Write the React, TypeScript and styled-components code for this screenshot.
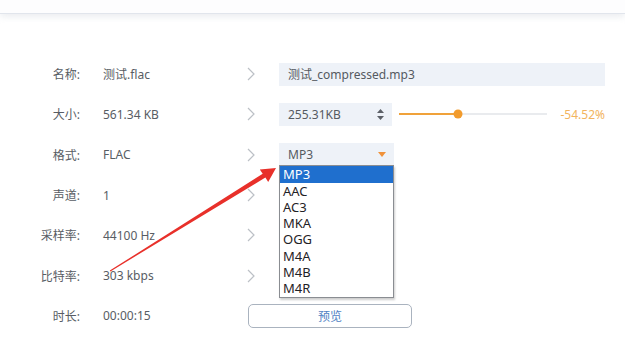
import React from "react";
import styled, { createGlobalStyle } from "styled-components";

const Global = createGlobalStyle`
  html, body { margin: 0; padding: 0; background: #fff; }
  body { font-family: "Noto Sans", "Noto Sans CJK SC", sans-serif; }
`;

const Page = styled.div`
  position: relative;
  width: 625px;
  height: 359px;
  overflow: hidden;
  background: #fff;
`;

const TopBar = styled.div`
  height: 13px;
  background: #fdfdfe;
  border-bottom: 1px solid #e1e5ec;
  box-shadow: 0 3px 6px rgba(200, 206, 216, 0.35);
`;

const Form = styled.div`
  padding: 40px 20px 0 0;
  display: flex;
  flex-direction: column;
`;

const Row = styled.div`
  display: grid;
  grid-template-columns: 80px 167px 31px 1fr;
  align-items: center;
  height: 40.3px;
  font-size: 12px;
  color: #585d64;
`;

const Label = styled.div`
  text-align: right;
  white-space: nowrap;
`;

const Value = styled.div`
  padding-left: 23px;
  white-space: nowrap;
`;

const Chevron = styled.div`
  display: flex;
  align-items: center;
  color: #bcc0c6;
`;

const Control = styled.div`
  display: flex;
  align-items: center;
  gap: 6px;
  position: relative;
  padding-left: 1px;
`;

const TextField = styled.div<{ $w?: number }>`
  box-sizing: border-box;
  height: 23px;
  width: ${(p) => (p.$w ? `${p.$w}px` : "100%")};
  background: #eef2f8;
  display: flex;
  align-items: center;
  padding: 0 8px 0 9px;
  color: #555a61;
  font-size: 12px;
  justify-content: space-between;
`;

const Spinner = styled.div`
  display: flex;
  flex-direction: column;
  gap: 3px;
  align-items: center;
`;

const SliderWrap = styled.div`
  position: relative;
  width: 148px;
  height: 12px;
  margin-left: 1px;
  display: flex;
  align-items: center;
`;

const Track = styled.div`
  width: 100%;
  height: 2px;
  background: #e9ebee;
  position: relative;
`;

const Fill = styled.div`
  position: absolute;
  left: 0;
  top: 0;
  height: 2px;
  background: #f0a23a;
`;

const Thumb = styled.div`
  position: absolute;
  top: 50%;
  width: 9px;
  height: 9px;
  border-radius: 50%;
  background: #f29b2c;
  transform: translate(-50%, -50%);
`;

const Percent = styled.div`
  margin-left: auto;
  color: #f2b45e;
  font-size: 12px;
`;

const Select = styled.div`
  box-sizing: border-box;
  width: 115px;
  height: 23px;
  background: #eef2f8;
  display: flex;
  align-items: center;
  justify-content: space-between;
  padding: 0 8px 0 9px;
  font-size: 12px;
  color: #555a61;
  position: relative;
`;

const Dropdown = styled.ul`
  position: absolute;
  left: 0;
  top: 22px;
  margin: 0;
  padding: 0;
  list-style: none;
  width: 115px;
  box-sizing: border-box;
  background: #fff;
  border: 1px solid #8a8d92;
  box-shadow: 1px 2px 2px rgba(0, 0, 0, 0.2);
  z-index: 2;
`;

const Option = styled.li<{ $active?: boolean }>`
  height: 16.3px;
  line-height: 16.3px;
  padding-left: 3px;
  font-size: 13px;
  color: ${(p) => (p.$active ? "#fff" : "#1f2226")};
  background: ${(p) => (p.$active ? "#1f6fce" : "transparent")};
`;

const PreviewButton = styled.button`
  grid-column: 3 / span 2;
  width: 164px;
  height: 24px;
  margin-left: 1px;
  background: #fff;
  border: 1px solid #aab3bf;
  border-radius: 5px;
  color: #4f82c4;
  font-family: "Noto Sans CJK SC", sans-serif;
  font-size: 12px;
  padding: 0;
`;

const Annotation = styled.svg`
  position: absolute;
  left: 0;
  top: 0;
  pointer-events: none;
  z-index: 3;
`;

const ChevronIcon = () => (
  <svg width="8" height="14" viewBox="0 0 8 14">
    <path d="M1 1 L7 7 L1 13" fill="none" stroke="currentColor" strokeWidth="1.2" />
  </svg>
);

const formats = ["MP3", "AAC", "AC3", "MKA", "OGG", "M4A", "M4B", "M4R"];

export default function App() {
  return (
    <Page>
      <Global />
      <TopBar />
      <Form>
        <Row>
          <Label>名称:</Label>
          <Value>测试.flac</Value>
          <Chevron><ChevronIcon /></Chevron>
          <Control>
            <TextField>测试_compressed.mp3</TextField>
          </Control>
        </Row>
        <Row>
          <Label>大小:</Label>
          <Value>561.34 KB</Value>
          <Chevron><ChevronIcon /></Chevron>
          <Control>
            <TextField $w={113}>
              <span>255.31KB</span>
              <Spinner>
                <svg width="7" height="4" viewBox="0 0 7 4"><path d="M0 4 L3.5 0 L7 4Z" fill="#5c6067" /></svg>
                <svg width="7" height="4" viewBox="0 0 7 4"><path d="M0 0 L3.5 4 L7 0Z" fill="#5c6067" /></svg>
              </Spinner>
            </TextField>
            <SliderWrap>
              <Track>
                <Fill style={{ width: "40%" }} />
              </Track>
              <Thumb style={{ left: "40%" }} />
            </SliderWrap>
            <Percent>-54.52%</Percent>
          </Control>
        </Row>
        <Row>
          <Label>格式:</Label>
          <Value>FLAC</Value>
          <Chevron><ChevronIcon /></Chevron>
          <Control>
            <Select>
              <span>MP3</span>
              <svg width="8" height="5" viewBox="0 0 8 5"><path d="M0 0 L8 0 L4 5Z" fill="#f0923a" /></svg>
              <Dropdown>
                {formats.map((f, i) => (
                  <Option key={f} $active={i === 0}>{f}</Option>
                ))}
              </Dropdown>
            </Select>
          </Control>
        </Row>
        <Row>
          <Label>声道:</Label>
          <Value>1</Value>
          <Chevron><ChevronIcon /></Chevron>
          <Control />
        </Row>
        <Row>
          <Label>采样率:</Label>
          <Value>44100 Hz</Value>
          <Chevron><ChevronIcon /></Chevron>
          <Control />
        </Row>
        <Row>
          <Label>比特率:</Label>
          <Value>303 kbps</Value>
          <Chevron><ChevronIcon /></Chevron>
          <Control />
        </Row>
        <Row>
          <Label>时长:</Label>
          <Value>00:00:15</Value>
          <PreviewButton>预览</PreviewButton>
        </Row>
      </Form>
      <Annotation width="625" height="359" viewBox="0 0 625 359">
        <polygon
          points="110.4,271.4 265.4,177.5 268.2,182 276,168 259.8,169.6 262.7,173.8 109.8,270.6"
          fill="#e8302a"
        />
      </Annotation>
    </Page>
  );
}
